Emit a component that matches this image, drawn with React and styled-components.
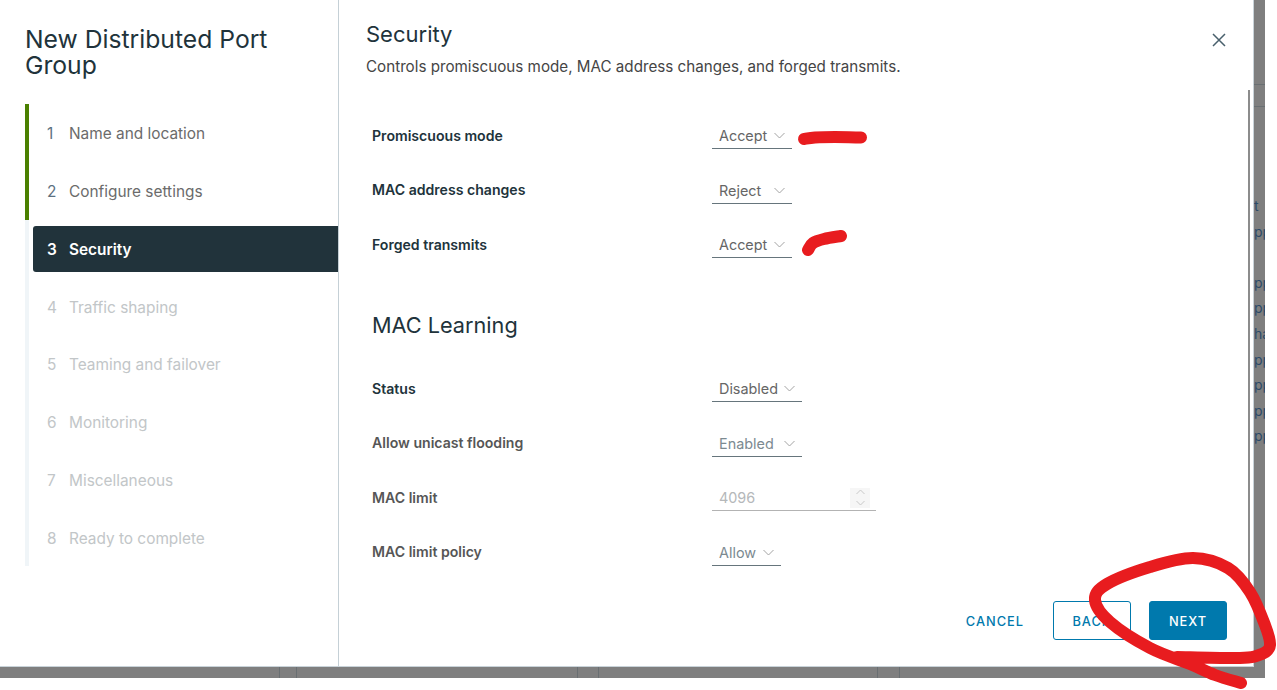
import React from 'react';
import styled, { createGlobalStyle } from 'styled-components';

const FONT = `Inter, "Liberation Sans", sans-serif`;

const GlobalStyle = createGlobalStyle`
  html, body {
    margin: 0;
    padding: 0;
    background: #fff;
    overflow: hidden;
  }
  * {
    box-sizing: border-box;
  }
`;

const Page = styled.div`
  position: relative;
  width: 1277px;
  height: 690px;
  overflow: hidden;
  background: #fff;
  font-family: ${FONT};
`;

const Backdrop = styled.div`
  width: 1265px;
  height: 678px;
  background: #7f7f7f;
  display: flex;
  flex-direction: column;
`;

const TopRow = styled.div`
  display: flex;
  height: 667px;
`;

const Modal = styled.div`
  width: 1254px;
  height: 667px;
  display: flex;
  background: #fff;
  border-right: 1px solid #c9d3d9;
  border-bottom: 1px solid #c9d3d9;
`;

const Sidebar = styled.aside`
  width: 339px;
  flex-shrink: 0;
  border-right: 1px solid #c5d0d6;
  padding: 26px 0 0 25px;
`;

const WizardTitle = styled.h1`
  margin: 0;
  width: 290px;
  height: 78px;
  font-size: 24.7px;
  line-height: 26px;
  font-weight: 400;
  color: #21333b;
`;

const StepList = styled.ol`
  list-style: none;
  margin: 0;
  padding: 0;
`;

const Step = styled.li`
  height: 57.75px;
  display: flex;
  align-items: center;
  padding-left: 4px;
  border-left: 4px solid ${p => (p.$done ? '#4a8000' : '#f0f5f8')};
`;

const StepInner = styled.div`
  flex: 1;
  height: 46px;
  margin-top: 2px;
  display: flex;
  align-items: center;
  padding-left: 14px;
  border-radius: 3px 0 0 3px;
  font-size: 15.4px;
  font-weight: ${p => (p.$active ? 600 : 400)};
  background: ${p => (p.$active ? '#21333b' : 'transparent')};
  color: ${p => (p.$active ? '#fff' : p.$done ? '#6b6b6b' : '#c2c6c8')};
`;

const StepNumber = styled.span`
  width: 22px;
  color: ${p => (p.$done && !p.$active ? '#5c7080' : 'inherit')};
`;

const Main = styled.main`
  flex: 1;
  display: flex;
  flex-direction: column;
  position: relative;
  min-width: 0;
`;

const Header = styled.header`
  display: flex;
  justify-content: space-between;
  align-items: flex-start;
  padding: 20px 26px 0 27px;
  height: 86px;
`;

const Title = styled.h2`
  margin: 0;
  font-size: 22px;
  line-height: 28px;
  font-weight: 400;
  color: #21333b;
`;

const Subtitle = styled.p`
  margin: 9px 0 0;
  font-size: 15.2px;
  line-height: 20px;
  color: #454545;
`;

const CloseButton = styled.button`
  border: 0;
  background: none;
  padding: 0;
  margin-top: 12px;
  width: 16px;
  height: 16px;
  color: #49606c;
  display: flex;
`;

const Form = styled.div`
  padding: 22px 0 0 33px;
`;

const Row = styled.div`
  height: 54.5px;
  display: flex;
  align-items: center;
`;

const Label = styled.label`
  width: 340px;
  font-size: 14.1px;
  font-weight: 600;
  color: ${p => (p.$muted ? '#565656' : '#21333b')};
`;

const Field = styled.div`
  width: ${p => p.$width}px;
  height: 26px;
  margin-top: 2px;
  padding: 0 7px;
  display: flex;
  align-items: center;
  justify-content: space-between;
  font-size: 14.4px;
  color: ${p => (p.$faint ? '#b5b8ba' : p.$muted ? '#7c8a91' : '#666')};
  border-bottom: 1px solid ${p => (p.$faint ? '#b3b3b3' : '#66757c')};
`;

const Chevron = styled.svg`
  width: 11px;
  height: 7px;
  fill: none;
  stroke: ${p => p.$color || '#a3a3a3'};
  stroke-width: 1;
`;

const Spinner = styled.div`
  width: 20px;
  height: 20px;
  margin-right: -1px;
  background: #f6f6f6;
  display: flex;
  flex-direction: column;
  align-items: center;
  justify-content: center;
  gap: 3px;
`;

const SectionTitle = styled.h3`
  margin: 0;
  height: 89.5px;
  padding-top: 38px;
  font-size: 21.7px;
  line-height: 30px;
  font-weight: 400;
  color: #21333b;
`;

const Footer = styled.footer`
  margin-top: auto;
  padding: 0 26px 26px 0;
  display: flex;
  justify-content: flex-end;
  gap: 18px;
`;

const Button = styled.button`
  width: ${p => (p.$flat ? 'auto' : '78px')};
  height: 39px;
  padding: 1px 0 0;
  margin-right: ${p => (p.$flat ? '10px' : 0)};
  border-radius: 3px;
  border: 1px solid ${p => (p.$flat ? 'transparent' : '#0079ad')};
  background: ${p => (p.$primary ? '#0079ad' : 'transparent')};
  color: ${p => (p.$primary ? '#fff' : '#0079ad')};
  font-family: ${FONT};
  font-size: 12.8px;
  font-weight: 500;
  letter-spacing: 1px;
`;

const Scrollbar = styled.div`
  position: absolute;
  right: 3px;
  top: 90px;
  bottom: 70px;
  width: 2px;
  background: #8c8c8c;
`;

const SideStrip = styled.div`
  width: 11px;
  overflow: hidden;
  padding-top: 84px;
  font-size: 14px;
  line-height: 25.6px;
  color: #2c4a68;
  white-space: nowrap;
`;

const StripRule = styled.div`
  height: 1px;
  margin-bottom: ${p => p.$gap}px;
  background: #696f72;
`;

const StripLine = styled.div`
  height: 25.6px;
`;

const BottomStrip = styled.div`
  flex: 1;
  display: flex;
`;

const BottomCell = styled.div`
  width: ${p => p.$width}px;
  border-right: 1px solid #696f72;
`;

const Marks = styled.svg`
  position: absolute;
  left: 0;
  top: 0;
  width: 1277px;
  height: 690px;
  pointer-events: none;
  fill: none;
  stroke: #e81c1f;
  stroke-width: 12;
  stroke-linecap: round;
  stroke-linejoin: round;
`;

const steps = [
  'Name and location',
  'Configure settings',
  'Security',
  'Traffic shaping',
  'Teaming and failover',
  'Monitoring',
  'Miscellaneous',
  'Ready to complete',
];

const stripLines = ['t', 'pp', '\u00a0', 'pp', 'pp', 'ha', 'pp', 'pp', 'pp', 'pp'];

const bottomCells = [280, 17, 281, 21, 279, 22];

// smooth line through hand-traced points of the red pen strokes
function smooth(points) {
  let d = `M${points[0][0]} ${points[0][1]}`;
  for (let i = 0; i < points.length - 1; i++) {
    const p0 = points[i - 1] || points[i];
    const p1 = points[i];
    const p2 = points[i + 1];
    const p3 = points[i + 2] || p2;
    const c1 = [p1[0] + (p2[0] - p0[0]) / 6, p1[1] + (p2[1] - p0[1]) / 6];
    const c2 = [p2[0] - (p3[0] - p1[0]) / 6, p2[1] - (p3[1] - p1[1]) / 6];
    d += ` C${c1[0]} ${c1[1]} ${c2[0]} ${c2[1]} ${p2[0]} ${p2[1]}`;
  }
  return d;
}

const circle = [
  [1241, 683], [1215, 675], [1190, 664], [1150, 648], [1110, 622], [1095, 600],
  [1107, 584], [1150, 567], [1193, 558], [1228, 568], [1250, 592], [1265, 625],
  [1270, 645], [1262, 654], [1240, 658], [1177, 657],
];
const dash = [[804, 139], [815, 137.5], [835, 137], [861, 137.5]];
const tick = [[808, 250], [813, 243], [824, 239], [841, 236]];

function Angle({ color }) {
  return (
    <Chevron viewBox="0 0 11 7" $color={color}>
      <path d="M0.5 1 L5.5 6 L10.5 1" />
    </Chevron>
  );
}

function Select({ value, width, muted }) {
  return (
    <Field $width={width} $muted={muted}>
      <span>{value}</span>
      <Angle />
    </Field>
  );
}

export default function App() {
  return (
    <Page>
      <GlobalStyle />
      <Backdrop>
        <TopRow>
          <Modal>
            <Sidebar>
              <WizardTitle>New Distributed Port Group</WizardTitle>
              <StepList>
                {steps.map((name, i) => (
                  <Step key={name} $done={i < 2}>
                    <StepInner $active={i === 2} $done={i < 2}>
                      <StepNumber $done={i < 2} $active={i === 2}>{i + 1}</StepNumber>
                      {name}
                    </StepInner>
                  </Step>
                ))}
              </StepList>
            </Sidebar>
            <Main>
              <Header>
                <div>
                  <Title>Security</Title>
                  <Subtitle>Controls promiscuous mode, MAC address changes, and forged transmits.</Subtitle>
                </div>
                <CloseButton aria-label="Close">
                  <svg width="16" height="16" viewBox="0 0 16 16" fill="none" stroke="currentColor" strokeWidth="1.5">
                    <path d="M2 2 L14 14 M14 2 L2 14" />
                  </svg>
                </CloseButton>
              </Header>
              <Form>
                <Row>
                  <Label>Promiscuous mode</Label>
                  <Select value="Accept" width={80} />
                </Row>
                <Row>
                  <Label>MAC address changes</Label>
                  <Select value="Reject" width={80} />
                </Row>
                <Row>
                  <Label>Forged transmits</Label>
                  <Select value="Accept" width={80} />
                </Row>
                <SectionTitle>MAC Learning</SectionTitle>
                <Row>
                  <Label>Status</Label>
                  <Select value="Disabled" width={90} />
                </Row>
                <Row>
                  <Label $muted>Allow unicast flooding</Label>
                  <Select value="Enabled" width={90} muted />
                </Row>
                <Row>
                  <Label $muted>MAC limit</Label>
                  <Field $width={164} $faint>
                    <span>4096</span>
                    <Spinner>
                      <Chevron viewBox="0 0 11 7" $color="#c9c9c9" style={{ transform: 'scaleY(-1)' }}>
                        <path d="M1.5 2 L5.5 6 L9.5 2" />
                      </Chevron>
                      <Chevron viewBox="0 0 11 7" $color="#c9c9c9">
                        <path d="M1.5 2 L5.5 6 L9.5 2" />
                      </Chevron>
                    </Spinner>
                  </Field>
                </Row>
                <Row>
                  <Label $muted>MAC limit policy</Label>
                  <Select value="Allow" width={69} muted />
                </Row>
              </Form>
              <Footer>
                <Button $flat>CANCEL</Button>
                <Button>BACK</Button>
                <Button $primary>NEXT</Button>
              </Footer>
              <Scrollbar />
            </Main>
          </Modal>
          <SideStrip>
            <StripRule $gap={21} />
            <StripRule $gap={86} />
            {stripLines.map((text, i) => (
              <StripLine key={i}>{text}</StripLine>
            ))}
          </SideStrip>
        </TopRow>
        <BottomStrip>
          {bottomCells.map((w, i) => (
            <BottomCell key={i} $width={w} />
          ))}
        </BottomStrip>
      </Backdrop>
      <Marks viewBox="0 0 1277 690">
        <path d={smooth(dash)} />
        <path d={smooth(tick)} />
        <path d={smooth(circle)} />
      </Marks>
    </Page>
  );
}
